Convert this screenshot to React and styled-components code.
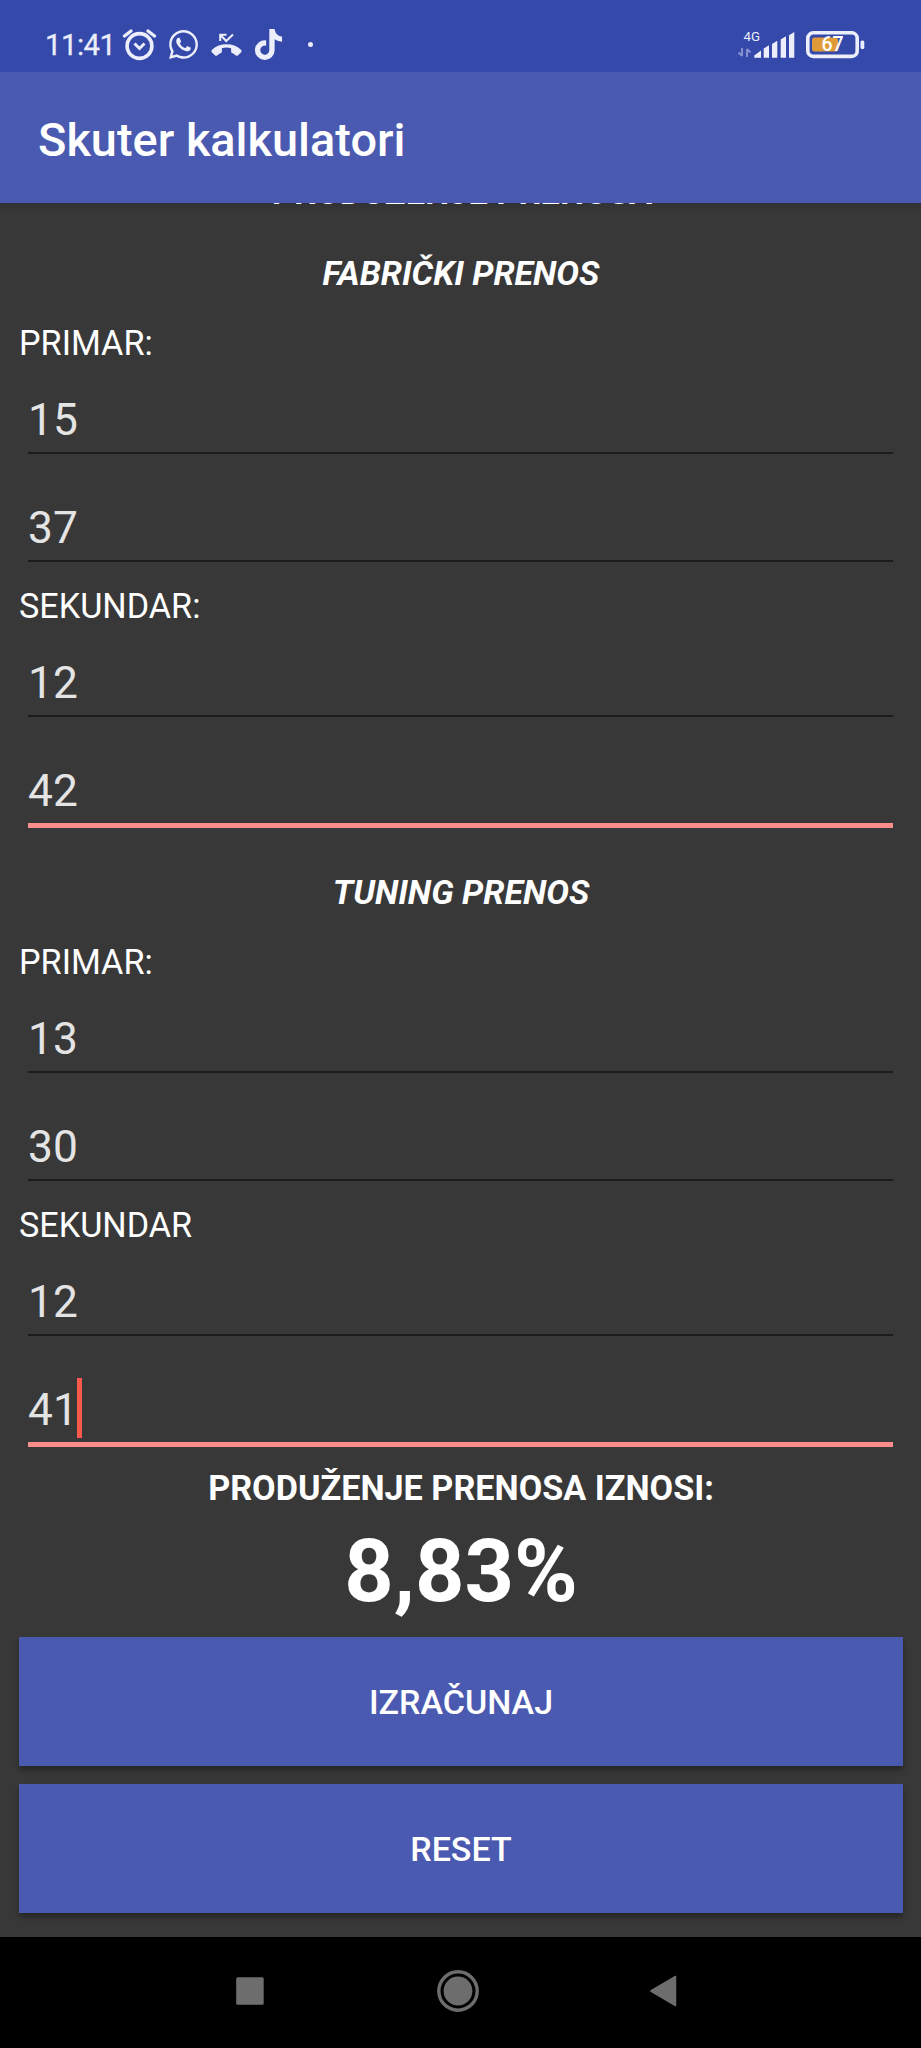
import React from "react";
import styled, { createGlobalStyle } from "styled-components";
import { FaTiktok, FaWhatsapp } from "react-icons/fa";

const GlobalStyle = createGlobalStyle`
  * {
    box-sizing: border-box;
  }
  body {
    margin: 0;
    background: #383838;
    font-family: Roboto, sans-serif;
  }
`;

const Screen = styled.div`
  width: 921px;
  height: 2048px;
  display: flex;
  flex-direction: column;
  overflow: hidden;
  background: #383838;
  color: #fff;
`;

const StatusBar = styled.header`
  height: 72px;
  flex: none;
  display: flex;
  align-items: center;
  justify-content: space-between;
  padding: 17px 56px 0 45px;
  background: #3549ab;
  color: #eceefb;
`;

const StatusGroup = styled.div`
  display: flex;
  align-items: center;
  gap: ${(props) => props.$gap || 0}px;
  height: 34px;
`;

const Clock = styled.span`
  width: 77px;
  font-size: 29.3px;
  letter-spacing: -0.5px;
  line-height: 34px;
  white-space: nowrap;
  -webkit-text-stroke: 0.3px currentColor;
`;

const IconSlot = styled.span`
  display: flex;
  justify-content: center;
  align-items: center;
  width: ${(props) => props.$width}px;
`;

const Dot = styled.span`
  width: 5px;
  height: 5px;
  margin-left: 14px;
  border-radius: 50%;
  background: currentColor;
`;

const AppBar = styled.div`
  height: 131px;
  flex: none;
  display: flex;
  align-items: center;
  padding: 5px 38px 0;
  background: #4a5ab0;
`;

const AppTitle = styled.h1`
  margin: 0;
  font-size: 46.9px;
  font-weight: 500;
  line-height: 56px;
`;

const Content = styled.main`
  height: 1734px;
  flex: none;
  overflow: hidden;
  padding: 0 18px 0 19px;
  background: linear-gradient(#2d2d42, #343434 2px, #383838 12px);
`;

// scrolled almost completely under the app bar
const PageHeading = styled.h2`
  height: 40px;
  margin: -31px 0 0 2px;
  font-size: 34.4px;
  font-weight: 700;
  line-height: 40px;
  text-align: center;
`;

const Section = styled.section`
  padding-top: ${(props) => props.$gap}px;
`;

const SectionTitle = styled.h3`
  height: 52px;
  margin: 0;
  font-size: 34px;
  font-style: italic;
  font-weight: 700;
  line-height: 53px;
  text-align: center;
`;

const Label = styled.label`
  display: block;
  height: 68px;
  padding-top: 21px;
  font-size: 34.2px;
  line-height: 47px;
`;

const Field = styled.div`
  display: flex;
  align-items: flex-end;
  height: ${(props) => props.$height}px;
  margin: 0 10px 0 9px;
  padding-bottom: 2px;
  border-bottom: ${(props) =>
    props.$active ? "5px solid #fb8e8c" : "2px solid #1c1c1c"};
  font-size: 44.3px;
  line-height: 60px;
  color: #e4e4e4;
`;

const Caret = styled.span`
  width: 5px;
  height: 60px;
  margin: 0 0 2px -1px;
  background: #f9594a;
`;

const ResultLabel = styled.p`
  height: 44px;
  margin: 19px 0 0;
  font-size: 34.2px;
  font-weight: 700;
  line-height: 44px;
  text-align: center;
`;

const Result = styled.p`
  height: 127px;
  margin: 0;
  font-size: 86.3px;
  font-weight: 700;
  line-height: 123px;
  text-align: center;
`;

const Button = styled.button`
  display: block;
  width: 100%;
  height: 128.5px;
  margin: 0 0 18.5px;
  padding: 2px 0 0;
  border: 0;
  background: #4a5ab0;
  box-shadow: 0 4px 5px rgba(0, 0, 0, 0.32);
  color: #fff;
  font-family: inherit;
  font-size: 34px;
  font-weight: 500;
`;

const NavBar = styled.nav`
  height: 111px;
  flex: none;
  display: grid;
  grid-template-columns: 28px 44px 28px;
  align-items: center;
  justify-items: end;
  column-gap: 171px;
  padding: 0 0 4px 236px;
  background: #000;
`;

const AlarmIcon = () => (
  <svg width="35" height="33" viewBox="0 0 35 33" fill="none" stroke="currentColor">
    <circle cx="17.5" cy="18" r="12.4" strokeWidth="3.6" />
    <path d="M2.5 8 9 3M32.5 8 26 3" strokeWidth="3.4" strokeLinecap="round" />
    <path d="m12.5 15.5 5 5 5-5" strokeWidth="3" />
  </svg>
);

const MissedCallIcon = () => (
  <svg width="31" height="24" viewBox="0 0 31 24" fill="currentColor">
    <path d="M1 16.8C5 13 10 11.3 15.5 11.3S26 13 30 16.8c.8.8.8 1.8 0 2.6l-2.9 2.8c-.8.8-1.7.8-2.5.1-1-.9-2.2-1.6-3.5-2.2-.7-.3-1-.8-1-1.5v-3.4c-3-.9-6.2-.9-9.2 0v3.4c0 .7-.3 1.2-1 1.5-1.3.6-2.4 1.3-3.5 2.2-.8.7-1.7.7-2.5-.1L1 19.4c-.8-.8-.8-1.8 0-2.6Z" />
    <path d="m9.5 2 5.7 6L22 1.5M9.2 8V1.8h6.3" fill="none" stroke="currentColor" strokeWidth="2" />
  </svg>
);

const SignalIcon = () => (
  <svg width="58" height="33" viewBox="0 0 58 33" fill="currentColor">
    <text x="6.5" y="12.7" fontSize="13.5" textLength="16.5" lengthAdjust="spacingAndGlyphs" fontFamily="Roboto, sans-serif">
      4G
    </text>
    <g fill="none" stroke="#8490d0" strokeWidth="2">
      <path d="M5 20v8M1.5 24.5 5 28M10 29v-8M13.5 24.5 10 21" />
    </g>
    <path d="M17.3 29.7v-2.2l6.7-5v7.2ZM26.7 29.7V20.5l5.3-3.2v12.4ZM35 29.7V16l5.3-3.2v16.9ZM43.7 29.7V11.500L49 8.3v21.4ZM52 29.7V7.2L57.3 4v25.7Z" />
  </svg>
);

const BatteryIcon = () => (
  <svg width="59" height="28" viewBox="0 0 59 28">
    <rect x="1.8" y="1.8" width="49.4" height="23.6" rx="5.5" fill="none" stroke="#eceefb" strokeWidth="3.6" />
    <rect x="6" y="6.5" width="26" height="14" rx="2.5" fill="#e09b38" />
    <rect x="54.5" y="9.5" width="3.8" height="8.5" rx="1.5" fill="#eceefb" />
    <text x="26.5" y="20.3" textAnchor="middle" fontSize="19.5" fontWeight="500" fontFamily="Roboto, sans-serif" fill="#fff">
      67
    </text>
  </svg>
);

const RecentsIcon = () => (
  <svg width="28" height="28" viewBox="0 0 28 28">
    <rect x=".2" y=".3" width="27.5" height="27.5" rx="1.5" fill="#6d6d6d" />
  </svg>
);

const HomeIcon = () => (
  <svg width="42" height="42" viewBox="0 0 42 42">
    <circle cx="21" cy="21" r="19.2" fill="none" stroke="#6d6d6d" strokeWidth="3.4" />
    <circle cx="21" cy="21" r="14.4" fill="#6d6d6d" />
  </svg>
);

const BackIcon = () => (
  <svg width="28" height="32" viewBox="0 0 28 32">
    <path d="M.8 16 25.5 1.5v29Z" fill="#6d6d6d" stroke="#6d6d6d" strokeWidth="1.5" strokeLinejoin="round" />
  </svg>
);

const App = () => {
  return (
    <>
      <GlobalStyle />
      <Screen>
        <StatusBar>
          <StatusGroup>
            <Clock>11:41</Clock>
            <IconSlot $width={35}>
              <AlarmIcon />
            </IconSlot>
            <IconSlot $width={52}>
              <FaWhatsapp size={33} />
            </IconSlot>
            <IconSlot $width={34}>
              <MissedCallIcon />
            </IconSlot>
            <IconSlot $width={51}>
              <FaTiktok size={31} />
            </IconSlot>
            <Dot />
          </StatusGroup>
          <StatusGroup $gap={11}>
            <SignalIcon />
            <BatteryIcon />
          </StatusGroup>
        </StatusBar>

        <AppBar>
          <AppTitle>Skuter kalkulatori</AppTitle>
        </AppBar>

        <Content>
          <PageHeading>PRODUŽENJE PRENOSA</PageHeading>

          <Section $gap={35}>
            <SectionTitle>FABRIČKI PRENOS</SectionTitle>
            <Label>PRIMAR:</Label>
            <Field $height={87}>15</Field>
            <Field $height={108}>37</Field>
            <Label>SEKUNDAR:</Label>
            <Field $height={87}>12</Field>
            <Field $height={111} $active>
              42
            </Field>
          </Section>

          <Section $gap={38}>
            <SectionTitle>TUNING PRENOS</SectionTitle>
            <Label>PRIMAR:</Label>
            <Field $height={87}>13</Field>
            <Field $height={108}>30</Field>
            <Label>SEKUNDAR</Label>
            <Field $height={87}>12</Field>
            <Field $height={111} $active>
              41
              <Caret />
            </Field>
          </Section>

          <ResultLabel>PRODUŽENJE PRENOSA IZNOSI:</ResultLabel>
          <Result>8,83%</Result>
          <Button>IZRAČUNAJ</Button>
          <Button>RESET</Button>
        </Content>

        <NavBar>
          <RecentsIcon />
          <HomeIcon />
          <BackIcon />
        </NavBar>
      </Screen>
    </>
  );
};

export default App;
